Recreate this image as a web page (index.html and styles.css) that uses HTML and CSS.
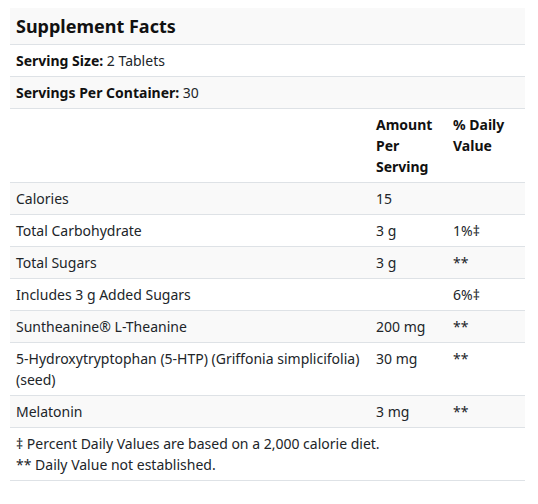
FILE: index.html
```html
<!DOCTYPE html>
<html>
<head>
<meta charset="utf-8">
<link rel="stylesheet" href="styles.css">
</head>
<body>
<table class="facts">
  <colgroup>
    <col class="c-name">
    <col class="c-amt">
    <col class="c-dv">
  </colgroup>
  <tbody>
    <tr class="stripe"><td colspan="3" class="title">Supplement Facts</td></tr>
    <tr><td colspan="3"><b>Serving Size:</b> 2 Tablets</td></tr>
    <tr class="stripe"><td colspan="3"><b>Servings Per Container:</b> 30</td></tr>
    <tr class="head"><td></td><td><b>Amount Per Serving</b></td><td><b>% Daily Value</b></td></tr>
    <tr class="stripe"><td>Calories</td><td>15</td><td></td></tr>
    <tr><td>Total Carbohydrate</td><td>3 g</td><td>1%‡</td></tr>
    <tr class="stripe"><td>Total Sugars</td><td>3 g</td><td>**</td></tr>
    <tr><td>Includes 3 g Added Sugars</td><td></td><td>6%‡</td></tr>
    <tr class="stripe"><td>Suntheanine® L-Theanine</td><td>200 mg</td><td>**</td></tr>
    <tr><td>5-Hydroxytryptophan (5-HTP) (Griffonia simplicifolia) (seed)</td><td>30 mg</td><td>**</td></tr>
    <tr class="stripe"><td>Melatonin</td><td>3 mg</td><td>**</td></tr>
    <tr><td colspan="3" class="notes">‡ Percent Daily Values are based on a 2,000 calorie diet.<br>** Daily Value not established.</td></tr>
  </tbody>
</table>
</body>
</html>
```

FILE: styles.css
```css
html, body {
  margin: 0;
  padding: 0;
  background: #fff;
}
body {
  padding: 8px 13px 8px 10px;
  font-family: "Noto Sans", "Open Sans", sans-serif;
  font-size: 14px;
  line-height: 21px;
  color: #212529;
}
.facts {
  width: 515px;
  border-collapse: collapse;
  table-layout: fixed;
}
.c-name { width: 360px; }
.c-amt { width: 77px; }
.c-dv { width: 78px; }
.facts td {
  padding: 5px 6px;
  border-bottom: 1px solid #dee2e6;
  vertical-align: top;
  text-align: left;
}
.facts b {
  font-weight: 700;
  color: #111;
}
.stripe td {
  background: #f9f9f9;
}
.title {
  font-size: 18px;
  font-weight: 700;
  line-height: 26px;
  color: #111;
}
```
